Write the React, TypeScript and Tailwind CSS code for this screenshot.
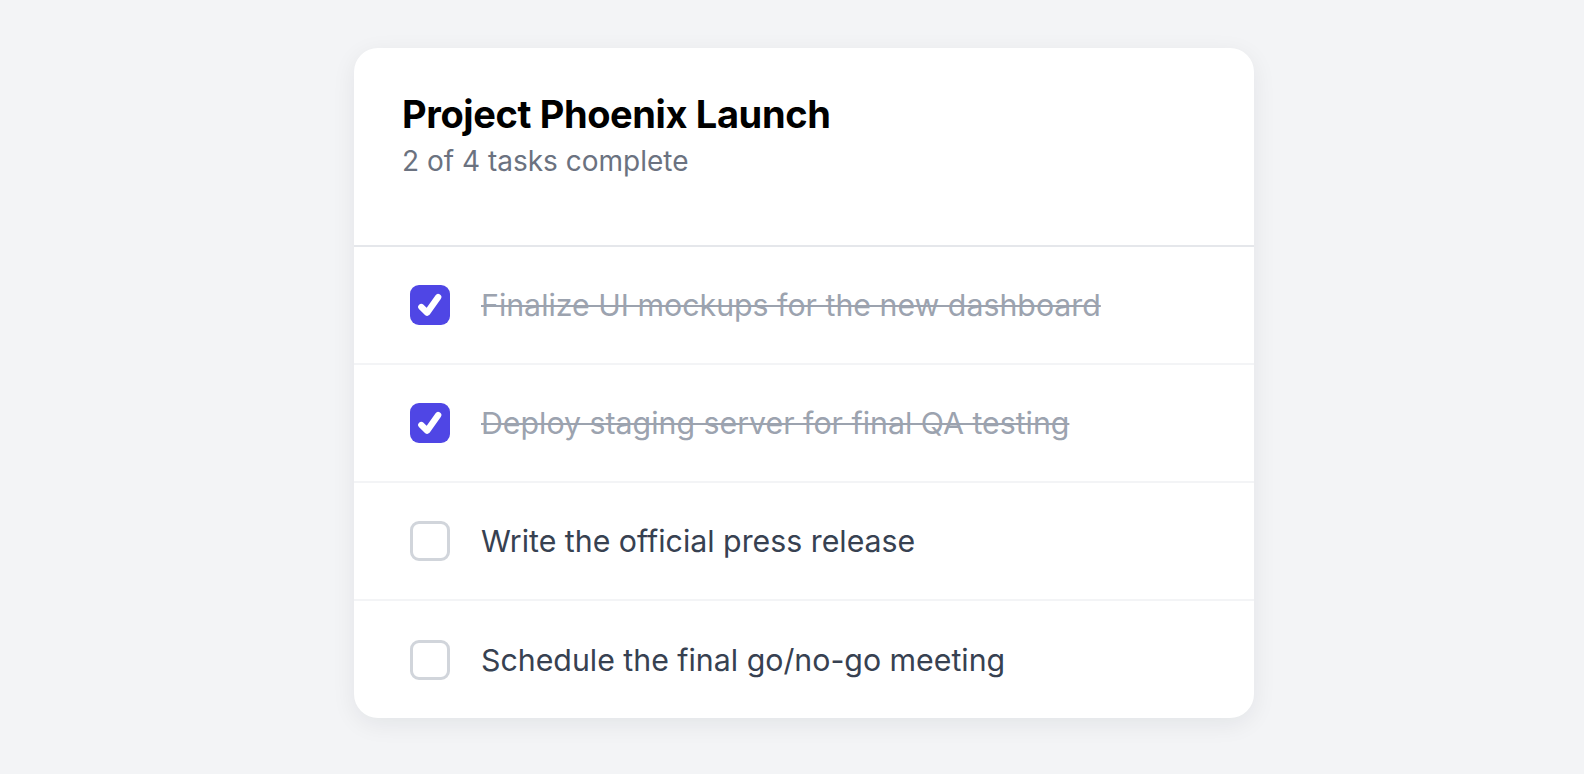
import { useState } from "react";

interface Task {
  id: number;
  label: string;
  done: boolean;
}

const initialTasks: Task[] = [
  { id: 1, label: "Finalize UI mockups for the new dashboard", done: true },
  { id: 2, label: "Deploy staging server for final QA testing", done: true },
  { id: 3, label: "Write the official press release", done: false },
  { id: 4, label: "Schedule the final go/no-go meeting", done: false },
];

export default function App() {
  const [tasks, setTasks] = useState(initialTasks);
  const doneCount = tasks.filter((t) => t.done).length;

  const toggle = (id: number) =>
    setTasks((prev) => prev.map((t) => (t.id === id ? { ...t, done: !t.done } : t)));

  return (
    <div className="min-h-screen bg-[#f3f4f6] flex justify-center pl-6 pt-[48px] font-['Inter',sans-serif]">
      <div className="w-[900px] h-[670px] bg-white rounded-[24px] shadow-[0_6px_24px_rgba(15,23,42,0.07)] overflow-hidden">
        <div className="h-[199px] border-b-2 border-[#e5e7eb] px-12 pt-[43px]">
          <h1 className="text-[38px] leading-[46px] font-bold text-black tracking-[-0.01em]">
            Project Phoenix Launch
          </h1>
          <p className="mt-[7px] text-[28px] leading-[34px] text-[#6b7280]">
            {doneCount} of {tasks.length} tasks complete
          </p>
        </div>
        <ul>
          {tasks.map((task, i) => (
            <li
              key={task.id}
              className={
                "h-[118px] flex items-center pl-[56px] gap-[31px] " +
                (i < tasks.length - 1 ? "border-b-2 border-[#f3f4f6]" : "")
              }
            >
              <Checkbox checked={task.done} onClick={() => toggle(task.id)} />
              <span
                className={
                  task.done
                    ? "text-[30.3px] leading-[36px] text-[#9ca3af] line-through decoration-[2px]"
                    : "text-[30.3px] leading-[36px] text-[#374151]"
                }
              >
                {task.label}
              </span>
            </li>
          ))}
        </ul>
      </div>
    </div>
  );
}

function Checkbox({ checked, onClick }: { checked: boolean; onClick: () => void }) {
  if (checked) {
    return (
      <button
        onClick={onClick}
        className="w-[40px] h-[40px] shrink-0 rounded-[9px] bg-[#4f46e5] flex items-center justify-center"
      >
        <svg viewBox="0 0 24 24" className="w-[40px] h-[40px]" fill="none">
          <path
            d="M6.8 13.2 L10.3 16.6 L16.9 7.3"
            stroke="white"
            strokeWidth="3.8"
            strokeLinecap="round"
            strokeLinejoin="round"
          />
        </svg>
      </button>
    );
  }
  return (
    <button
      onClick={onClick}
      className="w-[40px] h-[40px] shrink-0 rounded-[9px] border-[3px] border-[#d1d5db] bg-white"
    />
  );
}
